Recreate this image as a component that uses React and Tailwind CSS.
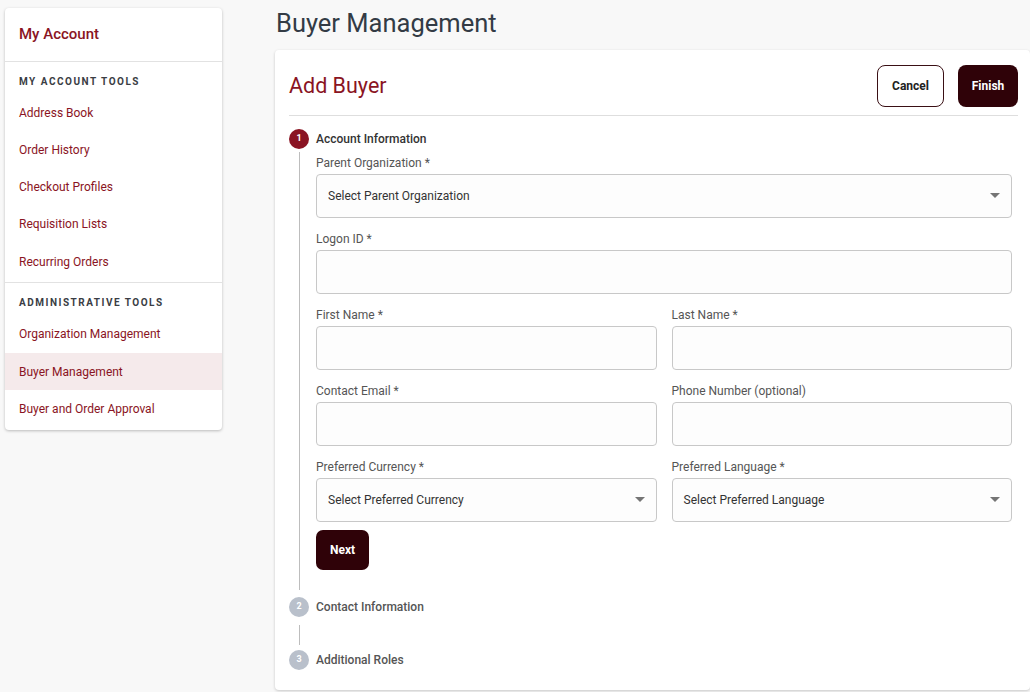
import React from "react";

const RED = "text-[#8a1423]";

function Caret() {
  return (
    <svg width="10" height="6" viewBox="0 0 10 6" className="shrink-0">
      <path d="M0 0 H10 L5 5 Z" fill="#757575" />
    </svg>
  );
}

function Field({ label, select, placeholder }) {
  return (
    <div className="flex flex-col flex-1 min-w-0">
      <div className="text-[12px] leading-[14px] text-[#555] mb-[4px]">{label}</div>
      <div className="h-[44px] border border-[#c8c8c8] rounded-[4px] bg-[#fdfdfd] flex items-center justify-between pl-[11px] pr-[11px]">
        {select ? (
          <>
            <span className="text-[12px] text-[#333]">{placeholder}</span>
            <Caret />
          </>
        ) : null}
      </div>
    </div>
  );
}

function Step({ n, label, active }) {
  return (
    <div className="flex items-center h-[20px]">
      <div
        className={
          "w-[20px] h-[20px] rounded-full flex items-center justify-center text-[9px] font-bold text-white " +
          (active ? "bg-[#8a1423]" : "bg-[#b9c0cb]")
        }
      >
        {n}
      </div>
      <div className={"ml-[7px] text-[12px] font-medium " + (active ? "text-[#333]" : "text-[#555]")}>{label}</div>
    </div>
  );
}

export default function App() {
  const tools = ["Address Book", "Order History", "Checkout Profiles", "Requisition Lists", "Recurring Orders"];
  const admin = ["Organization Management", "Buyer Management", "Buyer and Order Approval"];
  return (
    <div
      className="w-[1030px] h-[692px] bg-[#f8f8f8] flex overflow-hidden"
      style={{ fontFamily: "Roboto, 'Liberation Sans', sans-serif" }}
    >
      <div className="pl-[5px] pt-[8px] w-[222px] shrink-0">
        <div className="bg-white rounded-[4px] shadow-[0_1px_3px_rgba(0,0,0,0.25)] w-[217px] pb-[2px]">
          <div className={"h-[53px] flex items-center pl-[14px] text-[15px] font-medium " + RED}>My Account</div>
          <div className="border-t border-[#e2e2e2]" />
          <div className="pl-[14px] pt-[13px] pb-[5px] text-[10px] leading-[14px] font-bold tracking-[1.5px] text-[#3a3d44]">MY ACCOUNT TOOLS</div>
          {tools.map((t) => (
            <div key={t} className={"h-[37.25px] flex items-center pl-[14px] text-[12px] " + RED}>
              {t}
            </div>
          ))}
          <div className="border-t border-[#e2e2e2] mt-[2px]" />
          <div className="pl-[14px] pt-[13px] pb-[5px] text-[10px] leading-[14px] font-bold tracking-[1.5px] text-[#3a3d44]">ADMINISTRATIVE TOOLS</div>
          {admin.map((t) => (
            <div
              key={t}
              className={
                "h-[37.5px] flex items-center pl-[14px] text-[12px] " +
                RED +
                (t === "Buyer Management" ? " bg-[#f5eaeb]" : "")
              }
            >
              {t}
            </div>
          ))}
        </div>
      </div>

      <div className="flex-1 pl-[53px] flex flex-col">
        <div className="h-[50px] shrink-0 flex items-center text-[25.5px] text-[#333b45] pb-[4px] pl-[1px]">Buyer Management</div>
        <div className="flex-1 bg-white rounded-[4px] shadow-[0_1px_3px_rgba(0,0,0,0.2)] pl-[14px] pr-[12px] pt-[15px] mb-[2px]">
          <div className="flex items-center justify-between h-[42px]">
            <div className={"text-[21.5px] " + RED}>Add Buyer</div>
            <div className="flex gap-[14px]">
              <button className="h-[42px] w-[67px] border border-[#3a1015] rounded-[8px] bg-white text-[12px] font-bold text-[#222]">
                Cancel
              </button>
              <button className="h-[42px] w-[60px] rounded-[8px] bg-[#2f0208] text-[12px] font-bold text-white">
                Finish
              </button>
            </div>
          </div>
          <div className="border-t border-[#dedede] mt-[8px]" />
          <div className="pt-[13px]">
            <Step n="1" label="Account Information" active />
            <div className="flex">
              <div className="w-[20px] flex justify-center shrink-0 pt-[3px] pb-[7px]">
                <div className="w-px bg-[#bdbdbd] h-full" />
              </div>
              <div className="flex-1 pl-[7px] pr-[6px] pt-[7px] pb-[27px] flex flex-col">
                <div className="flex">
                  <Field label="Parent Organization *" select placeholder="Select Parent Organization" />
                </div>
                <div className="flex mt-[14px]">
                  <Field label="Logon ID *" />
                </div>
                <div className="flex mt-[14px] gap-[15px]">
                  <Field label="First Name *" />
                  <Field label="Last Name *" />
                </div>
                <div className="flex mt-[14px] gap-[15px]">
                  <Field label="Contact Email *" />
                  <Field label="Phone Number (optional)" />
                </div>
                <div className="flex mt-[14px] gap-[15px]">
                  <Field label="Preferred Currency *" select placeholder="Select Preferred Currency" />
                  <Field label="Preferred Language *" select placeholder="Select Preferred Language" />
                </div>
                <div className="mt-[8px]">
                  <button className="h-[40px] w-[53px] rounded-[7px] bg-[#2f0208] text-[12px] font-bold text-white">
                    Next
                  </button>
                </div>
              </div>
            </div>
            <Step n="2" label="Contact Information" />
            <div className="w-[20px] flex justify-center h-[33px] pt-[8px] pb-[5px]">
              <div className="w-px bg-[#bdbdbd] h-full" />
            </div>
            <Step n="3" label="Additional Roles" />
          </div>
        </div>
      </div>
    </div>
  );
}
